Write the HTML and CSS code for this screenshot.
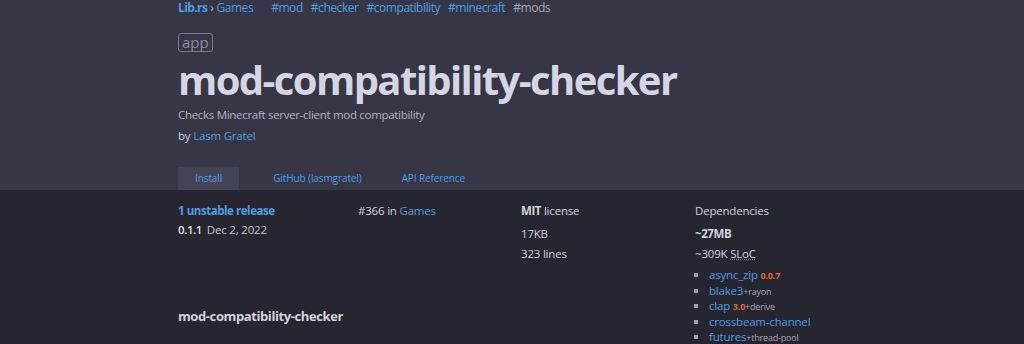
FILE: index.html
```html
<!DOCTYPE html>
<html>
<head>
<meta charset="utf-8">
<link rel="stylesheet" href="styles.css">
</head>
<body>
<header class="top">
  <div class="wrap">
    <nav class="crumbs">
      <a class="home" href="#">Lib.rs</a><span class="sep">›</span><a href="#">Games</a>
      <span class="tags"><a href="#">#mod</a><a href="#">#checker</a><a href="#">#compatibility</a><a href="#">#minecraft</a><span class="tag-plain">#mods</span></span>
    </nav>
    <div class="badge">app</div>
    <h1 class="title">mod-compatibility-checker</h1>
    <p class="desc">Checks Minecraft server-client mod compatibility</p>
    <p class="author">by <a href="#">Lasm Gratel</a></p>
    <div class="tabs">
      <a class="tab active" href="#">Install</a>
      <a class="tab" href="#">GitHub (lasmgratel)</a>
      <a class="tab" href="#">API Reference</a>
    </div>
  </div>
</header>
<main class="wrap body">
  <div class="left">
    <section class="meta">
      <div class="col">
        <a class="strong-link" href="#">1 unstable release</a>
        <div class="rel"><b>0.1.1</b> <span>Dec 2, 2022</span></div>
      </div>
      <div class="col">
        <div class="rank">#366 in <a href="#">Games</a></div>
      </div>
      <div class="col">
        <div><b>MIT</b> license</div>
        <div class="line2">17KB</div>
        <div class="line3">323 lines</div>
      </div>
    </section>
    <h2 class="readme">mod-compatibility-checker</h2>
  </div>
  <div class="col deps-col">
    <div>Dependencies</div>
    <div class="line2"><b>~27MB</b></div>
    <div class="line3">~309K <span class="abbr">SLoC</span></div>
    <ul class="deps">
      <li><a href="#">async_zip</a> <span class="ver">0.0.7</span></li>
      <li><a href="#">blake3</a><span class="feat">+rayon</span></li>
      <li><a href="#">clap</a> <span class="ver">3.0</span><span class="feat">+derive</span></li>
      <li><a href="#">crossbeam-channel</a></li>
      <li><a href="#">futures</a><span class="feat">+thread-pool</span></li>
    </ul>
  </div>
</main>
</body>
</html>
```

FILE: styles.css
```css
* { box-sizing: border-box; }
html, body { margin: 0; padding: 0; }
body {
  background: #262630;
  color: #d2d2dc;
  font-family: "Open Sans", "Noto Sans", sans-serif;
  font-size: 12px;
  letter-spacing: -0.2px;
  overflow: hidden;
  height: 344px;
}
a { color: #4f9fe0; text-decoration: none; }
b { letter-spacing: -0.4px; }
.wrap { padding-left: 178px; }
.top { background: #363646; height: 190px; }
.crumbs {
  display: flex;
  align-items: baseline;
  font-size: 12px;
  letter-spacing: -0.45px;
  height: 16px;
  line-height: 15px;
}
.crumbs .home { font-weight: 700; letter-spacing: -0.6px; }
.crumbs .sep { color: #b8b8c4; margin: 0 3px; }
.tags { display: flex; gap: 8px; margin-left: 18px; }
.tag-plain { color: #a8a8b4; }
.badge {
  display: block;
  width: fit-content;
  margin-top: 17px;
  border: 1px solid #7a7a88;
  border-radius: 3px;
  color: #8c8c98;
  font-size: 15px;
  line-height: 17px;
  padding: 0 3px;
  letter-spacing: 0;
}
.title {
  margin: 0;
  font-size: 40px;
  font-weight: 700;
  line-height: 55px;
  color: #d6d6e2;
  letter-spacing: -1.6px;
}
.desc { margin: 0; font-size: 11.5px; line-height: 16px; color: #b4b4c0; letter-spacing: -0.3px; }
.author { margin: 5px 0 0; font-size: 11.5px; line-height: 16px; color: #d0d0dc; }
.tabs { display: flex; margin-top: 23px; }
.tab {
  font-size: 10px;
  line-height: 23px;
  height: 23px;
  padding: 0 17px;
  letter-spacing: -0.1px;
}
.tab.active { background: #434357; }
.tab:nth-child(2) { margin-left: 17px; }
.tab:nth-child(3) { margin-left: 6px; }
.body {
  display: flex;
  padding-top: 13px;
  font-size: 11.5px;
  line-height: 16px;
}
.left { width: 517px; }
.meta {
  display: grid;
  grid-template-columns: 180px 163px 174px;
}
.strong-link { font-weight: 700; letter-spacing: -0.45px; }
.rel { margin-top: 3px; }
.rel b { font-weight: 600; color: #e0e0ea; }
.rel span { color: #c4c4d0; margin-left: 2px; }
.line2 { margin-top: 7px; }
.line3 { margin-top: 4px; }
.abbr { text-decoration: underline dotted #888; }
.readme {
  margin: 46px 0 0;
  font-size: 13px;
  line-height: 16px;
  font-weight: 700;
  letter-spacing: -0.4px;
  color: #d2d2dc;
}
.deps {
  list-style: square;
  margin: 5px 0 0 5px;
  padding-left: 9px;
}
.deps li { color: #a0a0b0; height: 15.5px; line-height: 15.5px; }
.deps a { font-size: 11.5px; }
.ver { color: #e06c3c; font-size: 9px; font-weight: 700; }
.feat { color: #a8a8b4; font-size: 9px; }
```
